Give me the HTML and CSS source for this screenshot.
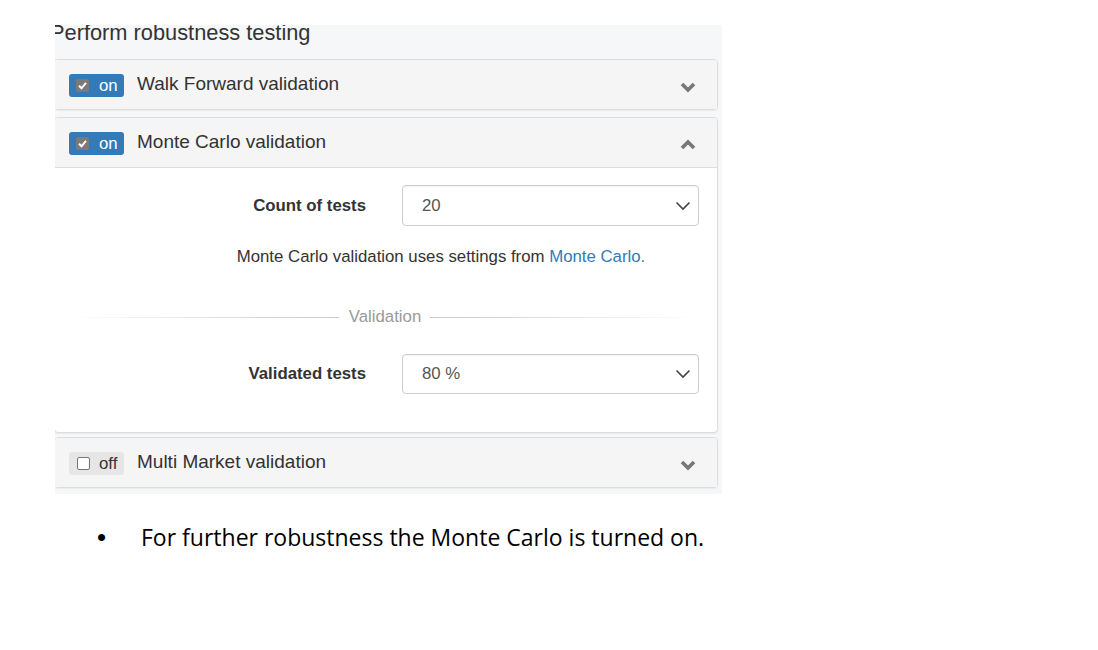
FILE: index.html
```html
<!DOCTYPE html>
<html>
<head>
<meta charset="utf-8">
<link rel="stylesheet" href="styles.css">
</head>
<body>
<div class="shot">
  <h2 class="heading">Perform robustness testing</h2>

  <div class="panel first">
    <div class="panel-head">
      <span class="toggle on"><span class="cb checked"><svg viewBox="0 0 13 13" width="13" height="13"><polyline points="3,6.8 5.5,9.3 10,3.8" fill="none" stroke="#fff" stroke-width="2"/></svg></span><span class="tlabel">on</span></span>
      <span class="title">Walk Forward validation</span>
      <svg class="chev" viewBox="0 0 16 12" width="16" height="12"><polyline points="2,3 8,9 14,3" fill="none" stroke="#777" stroke-width="3.6"/></svg>
    </div>
  </div>

  <div class="panel open">
    <div class="panel-head">
      <span class="toggle on"><span class="cb checked"><svg viewBox="0 0 13 13" width="13" height="13"><polyline points="3,6.8 5.5,9.3 10,3.8" fill="none" stroke="#fff" stroke-width="2"/></svg></span><span class="tlabel">on</span></span>
      <span class="title">Monte Carlo validation</span>
      <svg class="chev" viewBox="0 0 16 12" width="16" height="12"><polyline points="2,9 8,3 14,9" fill="none" stroke="#777" stroke-width="3.6"/></svg>
    </div>
    <div class="panel-body">
      <div class="row">
        <label class="lbl">Count of tests</label>
        <div class="select"><span>20</span><svg viewBox="0 0 16 10" width="16" height="10"><polyline points="1.5,1.5 8,8 14.5,1.5" fill="none" stroke="#444" stroke-width="1.6"/></svg></div>
      </div>
      <p class="note">Monte Carlo validation uses settings from <a class="link">Monte Carlo.</a></p>
      <div class="divider"><span class="line left"></span><span class="dtext">Validation</span><span class="line right"></span></div>
      <div class="row">
        <label class="lbl">Validated tests</label>
        <div class="select"><span>80 %</span><svg viewBox="0 0 16 10" width="16" height="10"><polyline points="1.5,1.5 8,8 14.5,1.5" fill="none" stroke="#444" stroke-width="1.6"/></svg></div>
      </div>
    </div>
  </div>

  <div class="panel">
    <div class="panel-head">
      <span class="toggle off"><span class="cb"></span><span class="tlabel">off</span></span>
      <span class="title">Multi Market validation</span>
      <svg class="chev" viewBox="0 0 16 12" width="16" height="12"><polyline points="2,3 8,9 14,3" fill="none" stroke="#777" stroke-width="3.6"/></svg>
    </div>
  </div>
</div>

<div class="bullet-line"><span class="dot">•</span><span class="btext">For further robustness the Monte Carlo is turned on.</span></div>
</body>
</html>
```

FILE: styles.css
```css
html, body {
  margin: 0;
  padding: 0;
  background: #fff;
}
.shot {
  margin-left: 55px;
  margin-top: 25px;
  width: 667px;
  height: 469px;
  background: #f5f7f9;
  overflow: hidden;
  font-family: "Liberation Sans", Arial, sans-serif;
  color: #333;
}
.heading {
  margin: -2px 0 0 -5px;
  font-size: 21.8px;
  line-height: 20px;
  font-weight: normal;
  color: #333;
  height: 36px;
  white-space: nowrap;
}
.panel {
  margin-left: -1px;
  width: 662px;
  border: 1px solid #ddd;
  border-radius: 4px;
  background: #fff;
  box-shadow: 0 1px 1px rgba(0,0,0,0.05);
}
.panel.first { margin-bottom: 7px; }
.panel.open { margin-bottom: 4px; }
.panel-head {
  height: 49px;
  background: #f5f5f5;
  border-radius: 3px 3px 0 0;
  display: flex;
  align-items: center;
  padding-left: 14px;
  padding-right: 21px;
  box-sizing: border-box;
}
.panel-head + .panel-body { border-top: 1px solid #ddd; }
.toggle {
  display: inline-flex;
  align-items: center;
  width: 55px;
  height: 23px;
  border-radius: 3px;
  box-sizing: border-box;
  padding-left: 7px;
  margin-top: 2px;
  font-size: 16.8px;
}
.toggle.on { background: #337ab7; color: #fff; }
.toggle.off { background: #e6e6e6; color: #333; padding-left: 8px; }
.cb {
  width: 13px;
  height: 13px;
  border-radius: 2px;
  box-sizing: border-box;
  display: inline-block;
}
.cb svg { display: block; }
.cb.checked { background: #7a7a7a; }
.toggle.off .cb { background: #fff; border: 1px solid #767676; }
.tlabel { margin-left: 10px; line-height: 16px; }
.toggle.off .tlabel { margin-left: 9px; }
.title {
  margin-left: 13px;
  font-size: 19px;
  padding-bottom: 2px;
  flex: 1;
}
.chev { margin-top: 4px; }
.panel-body {
  padding: 17px 18px 38px 0;
}
.row {
  display: flex;
  align-items: center;
}
.lbl {
  width: 311px;
  text-align: right;
  font-weight: bold;
  font-size: 16.8px;
  margin-right: 36px;
}
.select {
  flex: 1;
  height: 41px;
  box-sizing: border-box;
  border: 1px solid #ccc;
  border-radius: 4px;
  background: #fff;
  display: flex;
  align-items: center;
  justify-content: space-between;
  padding: 0 7px 0 19px;
  font-size: 16.8px;
  color: #555;
  box-shadow: inset 0 1px 1px rgba(0,0,0,0.04);
}
.note {
  margin: 21px 0 0 128px;
  text-align: center;
  font-size: 16.8px;
  line-height: 20px;
}
.link { color: #337ab7; }
.divider {
  display: flex;
  align-items: center;
  margin: 40px 0 0 15px;
}
.line { flex: 1; height: 1px; }
.line.left { background: linear-gradient(to right, rgba(200,200,200,0), #c8c8c8); }
.line.right { background: linear-gradient(to right, #c8c8c8, rgba(200,200,200,0)); }
.dtext {
  color: #999;
  font-size: 16.8px;
  padding: 0 9px 0 10px;
  line-height: 20px;
}
.divider + .row { margin-top: 27px; }
.divider + .row .select { height: 40px; }
.bullet-line {
  margin-top: 27px;
  display: flex;
  align-items: baseline;
  font-family: "Open Sans", "Liberation Sans", sans-serif;
  font-size: 23px;
  color: #000;
}
.dot {
  width: 44px;
  margin-left: 97px;
  font-family: "Liberation Sans", sans-serif;
  font-size: 26px;
}
```
